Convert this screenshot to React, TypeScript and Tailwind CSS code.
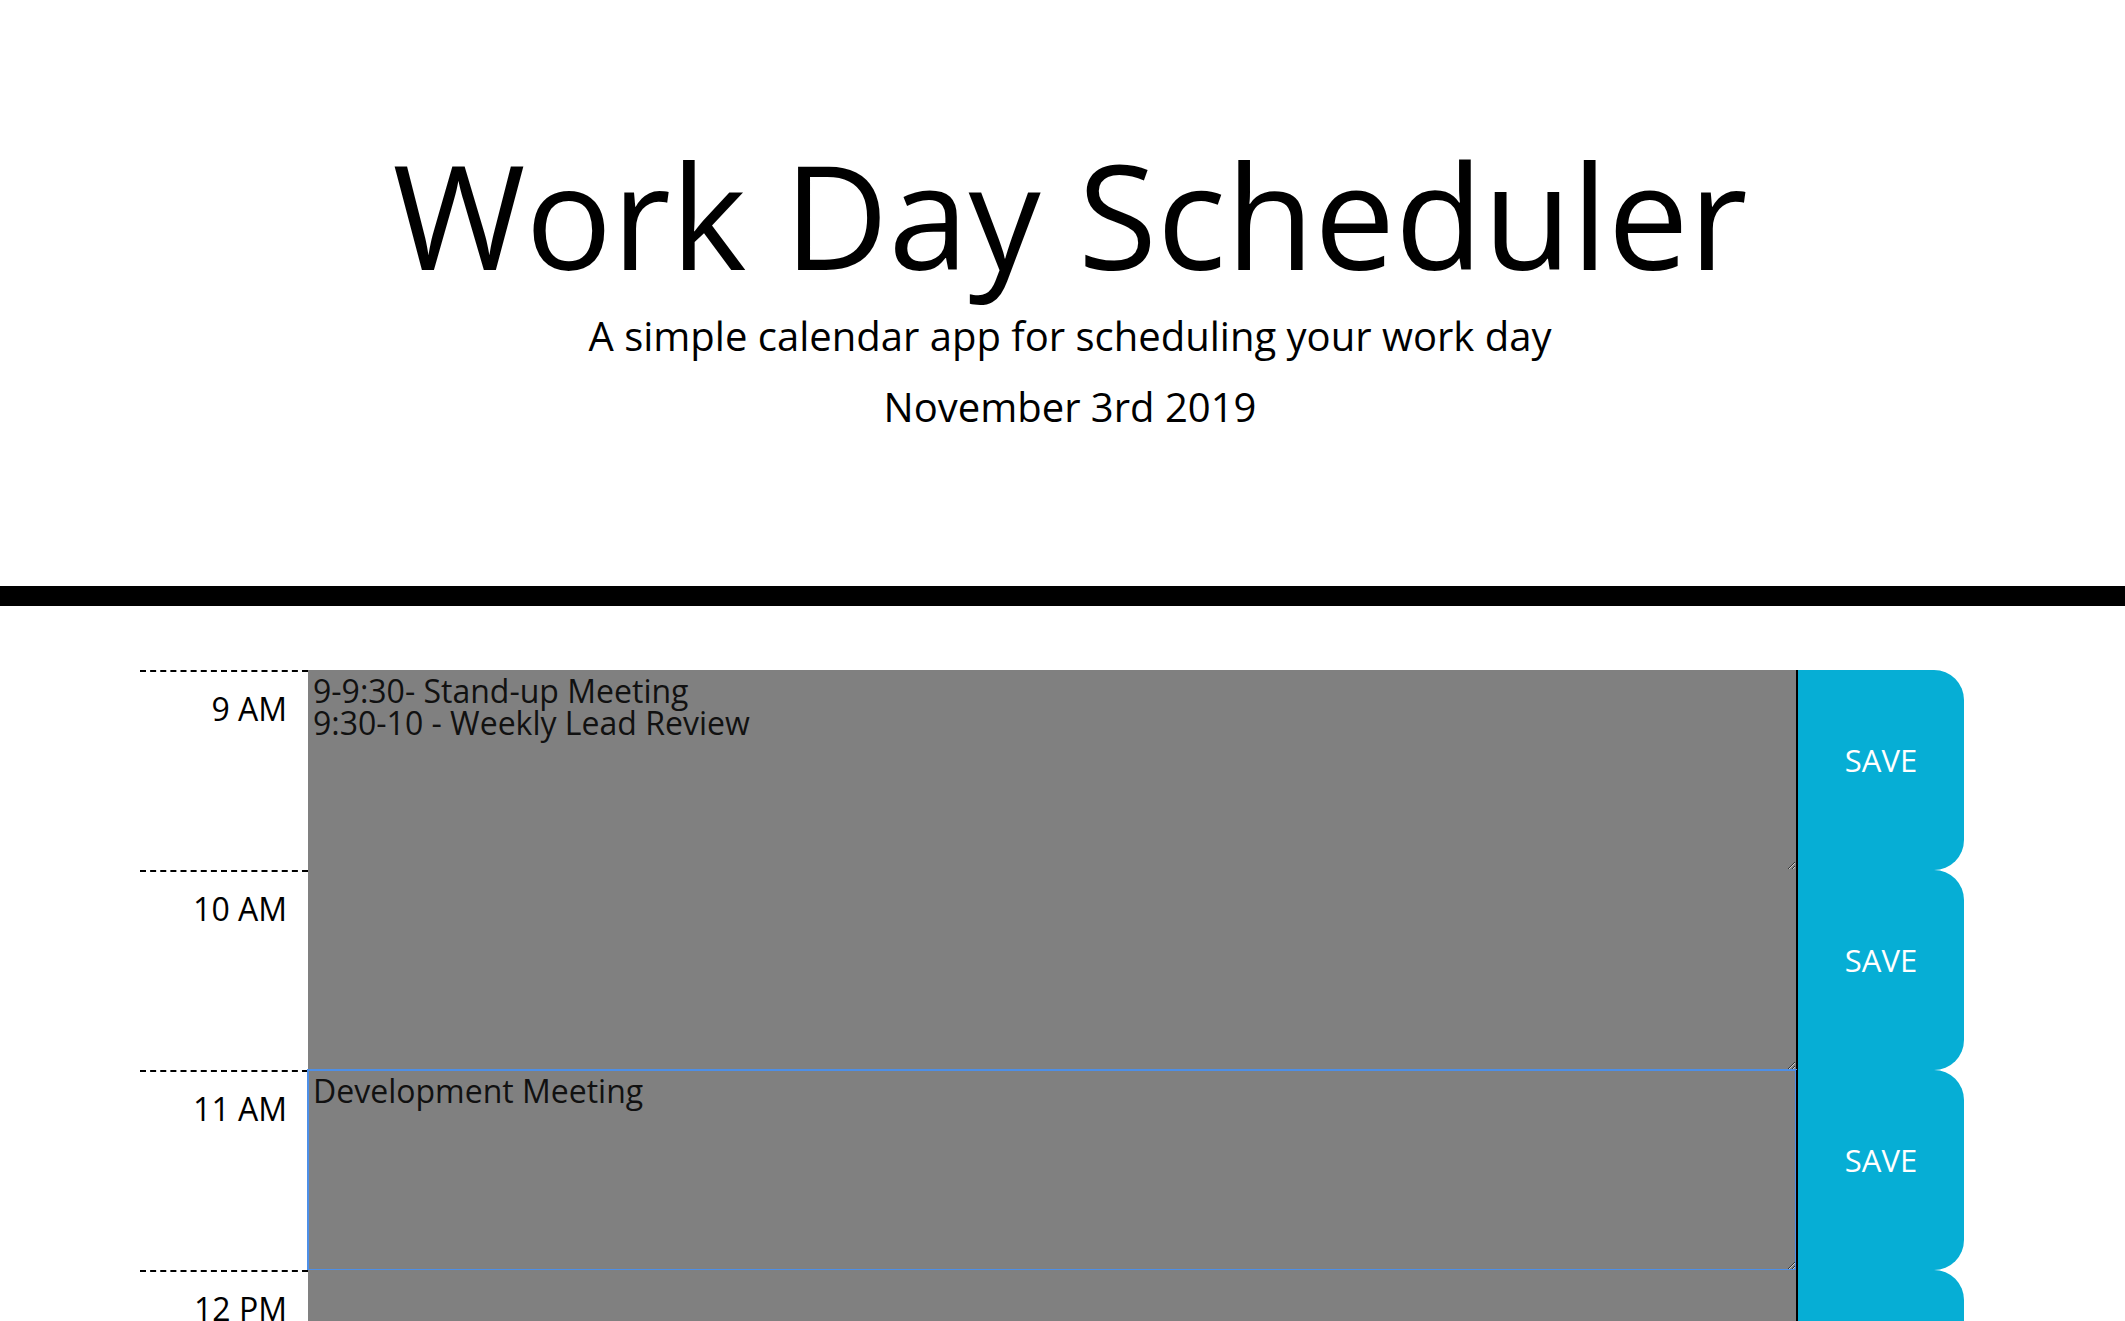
import React from "react";

interface TimeBlock {
  hour: string;
  text: string;
  focused?: boolean;
}

const blocks: TimeBlock[] = [
  { hour: "9 AM", text: "9-9:30- Stand-up Meeting\n9:30-10 - Weekly Lead Review" },
  { hour: "10 AM", text: "" },
  { hour: "11 AM", text: "Development Meeting", focused: true },
  { hour: "12 PM", text: "" },
  { hour: "1 PM", text: "" },
  { hour: "2 PM", text: "" },
  { hour: "3 PM", text: "" },
  { hour: "4 PM", text: "" },
  { hour: "5 PM", text: "" },
];

const App: React.FC = () => {
  return (
    <div className="min-h-screen bg-white text-black font-['Open_Sans',sans-serif]">
      {/* header */}
      <header className="pl-[15px] pt-[128px] pb-[149px] text-center border-b-[20px] border-black">
        <h1 className="text-[144px] leading-[173px] font-normal">Work Day Scheduler</h1>
        <p className="mt-[5px] text-[40px] leading-[60px] font-normal">
          A simple calendar app for scheduling your work day
        </p>
        <p className="mt-[11px] text-[40px] leading-[60px] font-normal">November 3rd 2019</p>
      </header>

      {/* time blocks */}
      <div className="ml-[140px] mt-[64px] w-[1824px] flex flex-col">
        {blocks.map((block) => (
          <div key={block.hour} className="flex h-[200px]">
            <div className="w-[168px] shrink-0 border-t-2 border-dashed border-black pt-[13px] pr-[21px] text-right text-[32px] leading-[48px]">
              {block.hour}
            </div>
            <textarea
              defaultValue={block.text}
              className={`flex-1 h-full bg-[#808080] text-[#111] text-[32px] leading-[32px] px-[5px] pt-[5px] pb-[4px] border-0 font-['Open_Sans',sans-serif] ${
                block.focused ? "outline-2 outline-solid outline-[#4d8fe8] -outline-offset-1" : "outline-none"
              }`}
            />
            <button className="w-[168px] shrink-0 border-l-2 border-black bg-[#06aed5] rounded-r-[30px] text-white text-[31px] pb-[20px] flex items-center justify-center font-['Open_Sans',sans-serif]">
              SAVE
            </button>
          </div>
        ))}
      </div>
    </div>
  );
};

export default App;
